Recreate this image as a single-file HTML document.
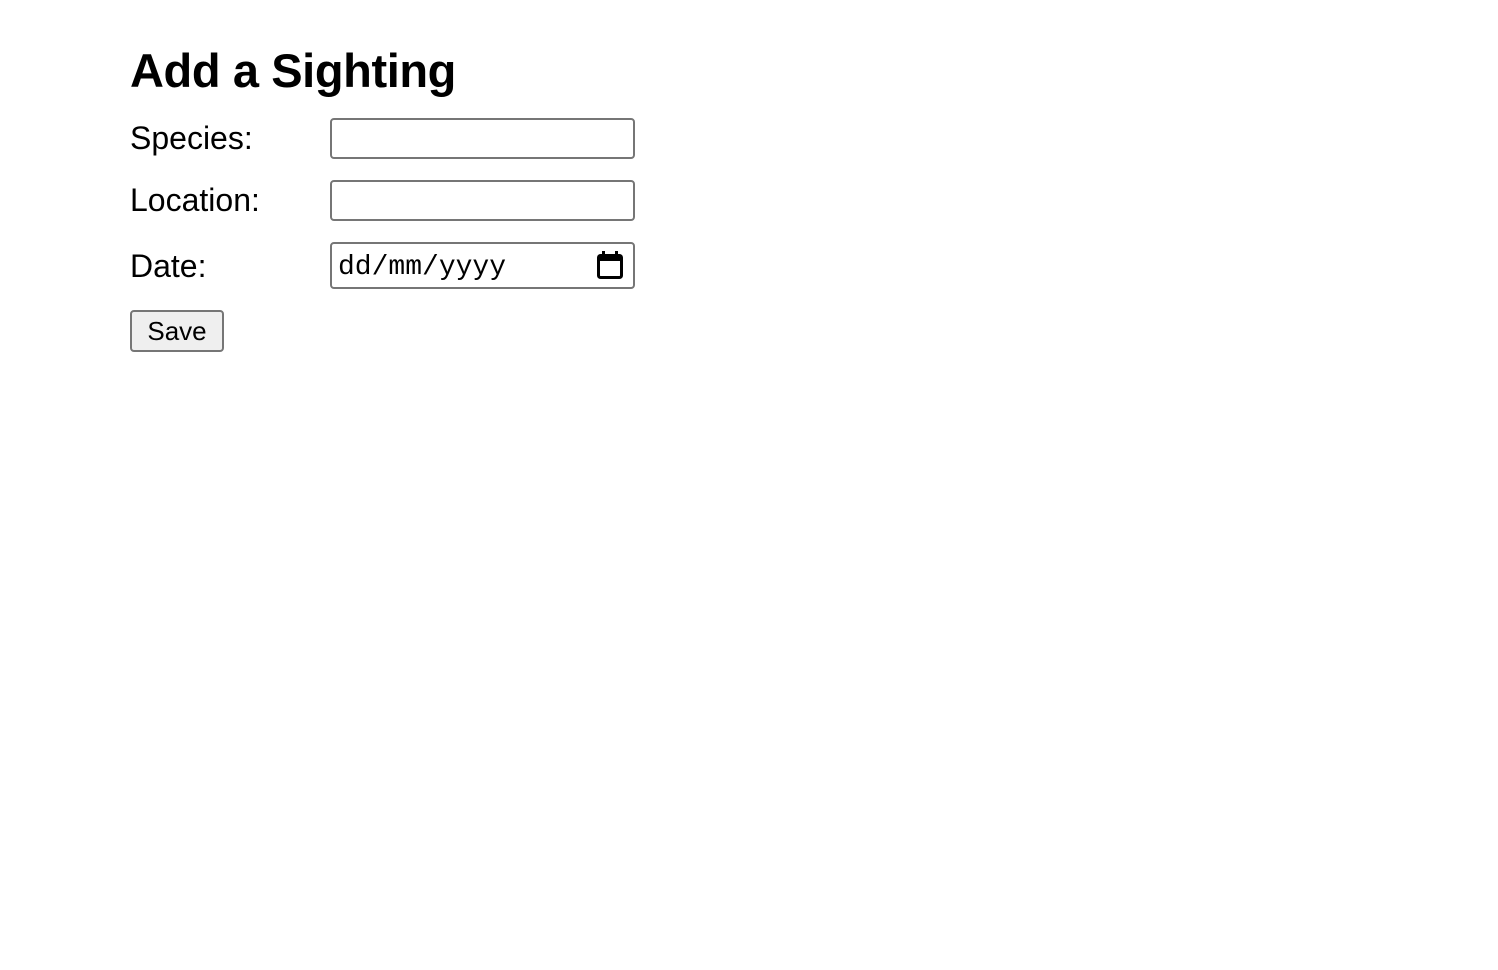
<!DOCTYPE html>
<html><head><style>
body{margin:0;background:#fff;font-family:"Liberation Sans",sans-serif;color:#000;}
.a{position:absolute;}
h1{position:absolute;left:130px;top:44px;margin:0;font-size:47px;font-weight:bold;line-height:54px;letter-spacing:-0.4px;}
.l{position:absolute;left:130px;font-size:32px;line-height:36px;}
.i{position:absolute;left:330px;width:301px;border:2px solid #767676;border-radius:4px;background:#fff;box-sizing:content-box;}
.b{position:absolute;left:130px;top:310px;width:90px;height:38px;border:2px solid #767676;border-radius:4px;background:#efefef;font-size:26px;line-height:38px;text-align:center;}
</style></head><body>
<h1>Add a Sighting</h1>
<div class="l" style="top:120px">Species:</div>
<div class="l" style="top:182px">Location:</div>
<div class="l" style="top:248px">Date:</div>
<div class="i" style="top:118px;height:37px"></div>
<div class="i" style="top:180px;height:37px"></div>
<div class="i" style="top:242px;height:43px">
<span class="a" style="left:6px;top:9px;font-family:'Liberation Mono',monospace;font-size:28px;line-height:30px">dd/mm/yyyy</span>
<svg class="a" style="left:264px;top:6px" width="28" height="30" viewBox="0 0 28 30"><rect x="2.5" y="5.5" width="23" height="22" rx="2" fill="none" stroke="#000" stroke-width="3"/><rect x="2" y="5" width="24" height="6" fill="#000"/><rect x="6" y="1" width="3" height="6" fill="#000"/><rect x="19" y="1" width="3" height="6" fill="#000"/></svg>
</div>
<div class="b">Save</div>
</body></html>
